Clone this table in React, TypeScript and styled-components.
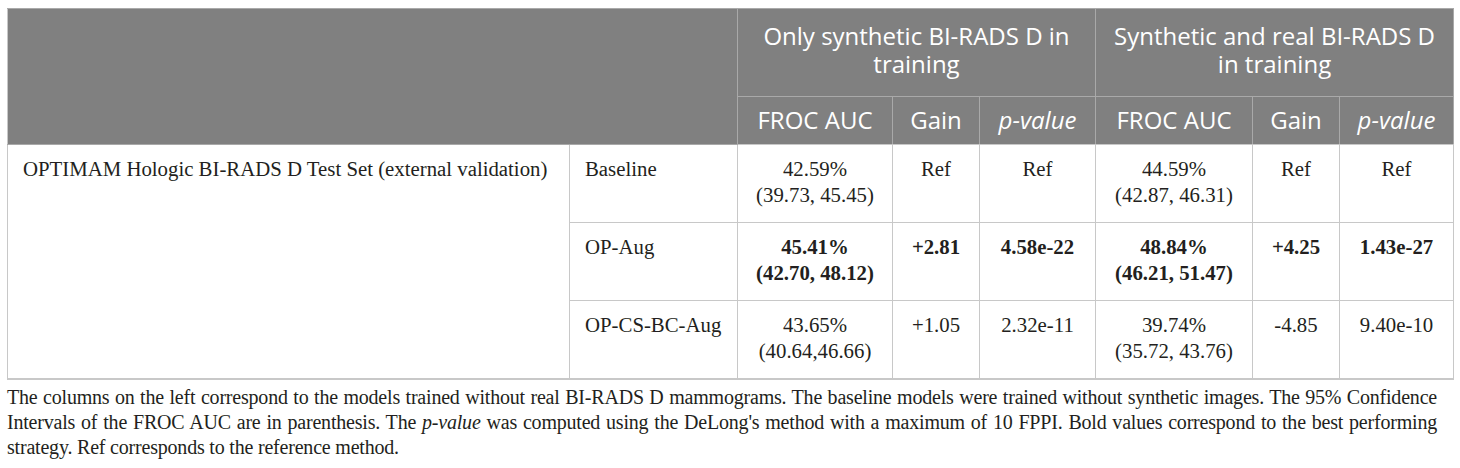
import styled, { createGlobalStyle } from "styled-components";

const GlobalStyle = createGlobalStyle`
  html, body {
    margin: 0;
    padding: 0;
    background: #ffffff;
  }
`;

const colWidths = [562, 168, 155, 87, 116, 157, 87, 114];

type Row = {
  model: string;
  bold?: boolean;
  cells: [string, string?][];
};

const rows: Row[] = [
  {
    model: "Baseline",
    cells: [
      ["42.59%", "(39.73, 45.45)"],
      ["Ref"],
      ["Ref"],
      ["44.59%", "(42.87, 46.31)"],
      ["Ref"],
      ["Ref"],
    ],
  },
  {
    model: "OP-Aug",
    bold: true,
    cells: [
      ["45.41%", "(42.70, 48.12)"],
      ["+2.81"],
      ["4.58e-22"],
      ["48.84%", "(46.21, 51.47)"],
      ["+4.25"],
      ["1.43e-27"],
    ],
  },
  {
    model: "OP-CS-BC-Aug",
    cells: [
      ["43.65%", "(40.64,46.66)"],
      ["+1.05"],
      ["2.32e-11"],
      ["39.74%", "(35.72, 43.76)"],
      ["-4.85"],
      ["9.40e-10"],
    ],
  },
];

const App = () => {
  return (
    <>
      <GlobalStyle />
      <Page>
        <Table>
          <colgroup>
            {colWidths.map((w, i) => (
              <col key={i} style={{ width: w }} />
            ))}
          </colgroup>
          <thead>
            <tr>
              <HeadCell colSpan={2} rowSpan={2} />
              <GroupCell colSpan={3}>
                Only synthetic BI-RADS D in
                <br />
                training
              </GroupCell>
              <GroupCell colSpan={3}>
                Synthetic and real BI-RADS D
                <br />
                in training
              </GroupCell>
            </tr>
            <tr>
              <SubCell>FROC AUC</SubCell>
              <SubCell>Gain</SubCell>
              <SubCell>
                <em>p-value</em>
              </SubCell>
              <SubCell>FROC AUC</SubCell>
              <SubCell>Gain</SubCell>
              <SubCell>
                <em>p-value</em>
              </SubCell>
            </tr>
          </thead>
          <tbody>
            {rows.map((row, r) => (
              <tr key={row.model}>
                {r === 0 && (
                  <LabelCell rowSpan={3}>
                    OPTIMAM Hologic BI-RADS D Test Set (external validation)
                  </LabelCell>
                )}
                <LabelCell>{row.model}</LabelCell>
                {row.cells.map(([a, b], i) => (
                  <ValueCell key={i} $bold={row.bold}>
                    {a}
                    {b && (
                      <>
                        <br />
                        {b}
                      </>
                    )}
                  </ValueCell>
                ))}
              </tr>
            ))}
          </tbody>
        </Table>
        <Caption>
          <CaptionLine $justify>
            The columns on the left correspond to the models trained without
            real BI-RADS D mammograms. The baseline models were trained without
            synthetic images. The 95% Confidence
          </CaptionLine>
          <CaptionLine $justify>
            Intervals of the FROC AUC are in parenthesis. The <em>p-value</em>{" "}
            was computed using the DeLong's method with a maximum of 10 FPPI.
            Bold values correspond to the best performing
          </CaptionLine>
          <CaptionLine>
            strategy. Ref corresponds to the reference method.
          </CaptionLine>
        </Caption>
      </Page>
    </>
  );
};

export default App;

const Page = styled.div`
  padding: 8px 7px 0 7px;
  width: 1447px;
`;

const Table = styled.table`
  width: 1447px;
  table-layout: fixed;
  border-collapse: collapse;
  border-top: 1px solid #c4c4c4;
  border-bottom: 2px solid #c8c8c8;
  border-left: 1px solid #c8c8c8;
  border-right: 1px solid #c8c8c8;
`;

const HeadCell = styled.th`
  background: #808080;
  padding: 0;
  border: 1px solid #a9a9a9;
  border-left: none;
`;

const GroupCell = styled.th`
  background: #808080;
  color: #ffffff;
  font-family: "Open Sans", sans-serif;
  font-weight: 400;
  font-size: 24px;
  line-height: 28px;
  text-align: center;
  padding: 13px 10px 18px;
  border: 1px solid #a9a9a9;
`;

const SubCell = styled.th`
  background: #808080;
  color: #ffffff;
  font-family: "Open Sans", sans-serif;
  font-weight: 400;
  font-size: 24px;
  line-height: 28px;
  text-align: center;
  white-space: nowrap;
  padding: 9px 4px 10px;
  border: 1px solid #a9a9a9;
  border-bottom: 1px solid #c8c8c8;
`;

const LabelCell = styled.td`
  font-family: "Liberation Serif", "Times New Roman", serif;
  font-size: 20.8px;
  line-height: 26px;
  color: #231f20;
  text-align: left;
  vertical-align: top;
  padding: 11px 15px 14px;
  border: 1px solid #c8c8c8;
`;

const ValueCell = styled.td<{ $bold?: boolean }>`
  font-family: "Liberation Serif", "Times New Roman", serif;
  font-size: 20.8px;
  line-height: 26px;
  font-weight: ${(p) => (p.$bold ? 700 : 400)};
  color: #231f20;
  text-align: center;
  vertical-align: top;
  white-space: nowrap;
  padding: 11px 4px 14px;
  border: 1px solid #c8c8c8;
`;

const Caption = styled.div`
  margin-top: 5px;
  width: 1430px;
`;

const CaptionLine = styled.div<{ $justify?: boolean }>`
  font-family: "Liberation Serif", "Times New Roman", serif;
  font-size: 20px;
  letter-spacing: -0.2px;
  line-height: 25px;
  color: #231f20;
  white-space: nowrap;
  text-align: ${(p) => (p.$justify ? "justify" : "left")};
  text-align-last: ${(p) => (p.$justify ? "justify" : "left")};
`;
